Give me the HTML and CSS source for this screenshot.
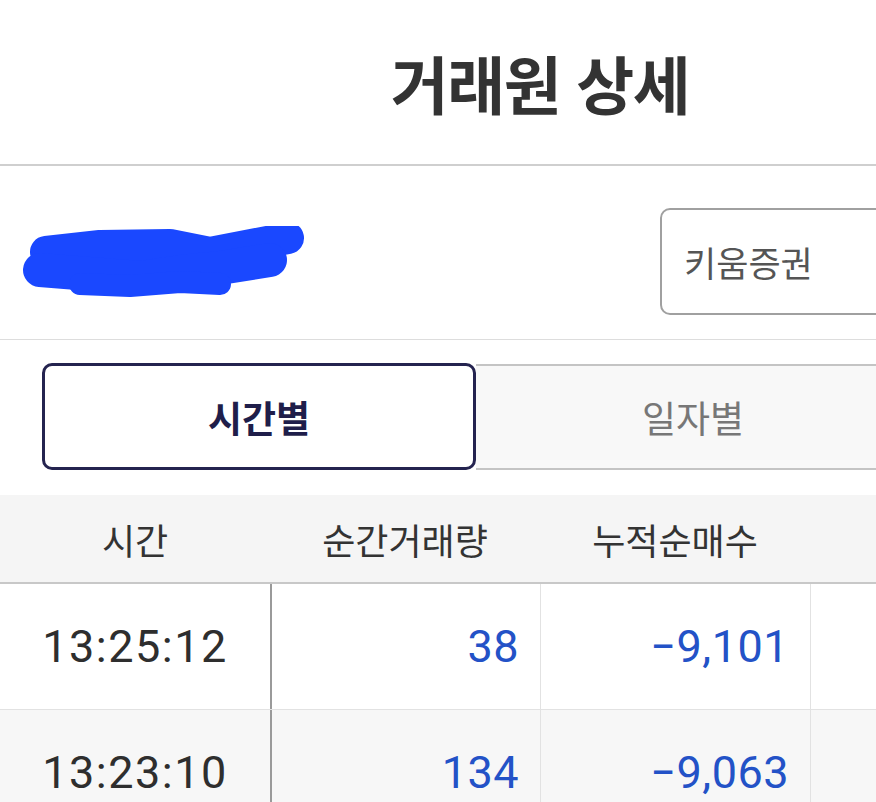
FILE: index.html
```html
<!DOCTYPE html>
<html lang="ko">
<head>
<meta charset="utf-8">
<title>거래원 상세</title>
<link rel="stylesheet" href="styles.css">
</head>
<body>
<div class="screen">
  <header class="topbar">
    <h1 class="title">거래원 상세</h1>
  </header>
  <section class="stock-row">
    <div class="redact">
      <svg width="300" height="80" viewBox="0 0 300 80">
        <g fill="none" stroke="#1a48ff" stroke-linecap="round" stroke-linejoin="round">
          <path d="M26 26 L80 20 L150 19 L190 27 L268 12" stroke-width="32"/>
          <path d="M20 44 L70 48 L120 52 L160 46 L200 42 L250 34" stroke-width="34"/>
          <path d="M60 58 L110 60 L160 56 L200 58" stroke-width="22"/>
        </g>
      </svg>
    </div>
    <div class="select">키움증권</div>
  </section>
  <nav class="tabs">
    <div class="tab active">시간별</div>
    <div class="tab">일자별</div>
    <div class="tab rest"></div>
  </nav>
  <div class="table">
    <div class="thead">
      <div class="th">시간</div>
      <div class="th">순간거래량</div>
      <div class="th">누적순매수</div>
      <div class="th"></div>
    </div>
    <div class="tr">
      <div class="td time">13:25:12</div>
      <div class="td num">38</div>
      <div class="td num">−9,101</div>
      <div class="td"></div>
    </div>
    <div class="tr alt">
      <div class="td time">13:23:10</div>
      <div class="td num">134</div>
      <div class="td num">−9,063</div>
      <div class="td"></div>
    </div>
  </div>
</div>
</body>
</html>
```
FILE: styles.css
```css
html, body {
  margin: 0;
  padding: 0;
  overflow: hidden;
  background: #ffffff;
}
body {
  font-family: "Noto Sans CJK KR", "Noto Sans", sans-serif;
  color: #333333;
}
.screen {
  width: 1080px;
}
.topbar {
  height: 164px;
  border-bottom: 2px solid #cfcfcf;
  display: flex;
  align-items: center;
  justify-content: center;
}
.title {
  margin: 0;
  font-size: 63px;
  font-weight: 700;
  color: #333333;
  letter-spacing: -1.5px;
  padding-bottom: 2px;
}
.stock-row {
  height: 174px;
  border-bottom: 1px solid #dddddd;
  display: flex;
  align-items: center;
  justify-content: space-between;
  padding: 18px 42px 0 20px;
  box-sizing: border-box;
}
.redact {
  display: flex;
  align-items: center;
  margin-top: 8px;
}
.select {
  width: 378px;
  height: 107px;
  box-sizing: border-box;
  border: 2px solid #a0a0a0;
  border-radius: 10px;
  display: flex;
  align-items: center;
  padding-left: 22px;
  font-size: 35px;
  color: #555555;
}
.tabs {
  display: flex;
  padding: 23px 0 25px 42px;
}
.tab {
  flex: 0 0 434px;
  width: 434px;
  display: flex;
  align-items: center;
  justify-content: center;
  background: #f8f8f8;
  border-top: 2px solid #c4c4c4;
  border-bottom: 2px solid #c4c4c4;
  font-size: 37px;
  color: #777777;
  box-sizing: border-box;
  height: 106px;
  margin-top: 1px;
}
.tab.active {
  background: #ffffff;
  border: 3px solid #24234f;
  border-radius: 10px;
  color: #1f1e4a;
  font-weight: 700;
  margin-top: 0;
  height: 107px;
}
.tab.rest {
  flex: 0 0 128px;
  width: 128px;
}
.table {
  width: 1080px;
}
.thead {
  display: grid;
  grid-template-columns: repeat(4, 270px);
  height: 87px;
  background: #f5f5f5;
  border-bottom: 2px solid #c8c8c8;
}
.th {
  display: flex;
  align-items: center;
  justify-content: center;
  font-size: 36px;
  color: #333333;
}
.tr {
  display: grid;
  grid-template-columns: repeat(4, 270px);
  height: 125px;
  border-bottom: 1px solid #e2e2e2;
  background: #ffffff;
}
.tr.alt {
  background: #f7f7f7;
}
.td {
  display: flex;
  align-items: center;
  border-left: 1px solid #e2e2e2;
  font-family: Roboto, "Noto Sans", sans-serif;
  font-size: 45px;
}
.td:first-child {
  border-left: none;
}
.td:nth-child(2) {
  border-left: 2px solid #9a9a9a;
}
.td.time {
  justify-content: center;
  color: #2e2e2e;
  letter-spacing: 1.5px;
}
.td.num {
  justify-content: flex-end;
  padding-right: 21px;
  color: #2352c7;
  letter-spacing: 0.5px;
}
```
